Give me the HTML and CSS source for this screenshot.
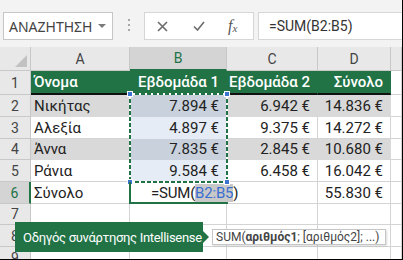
FILE: index.html
```html
<!DOCTYPE html>
<html>
  <head>
    <title>SUM</title>
    <link rel="stylesheet" href="styles.css">
  </head>
  <body>
    <div class="window">

      <div class="formula-bar">
        <div class="name-box"><span>ΑΝΑΖΗΤΗΣΗ</span><i class="caret"></i></div>
        <div class="grip"><i></i><i></i><i></i></div>
        <div class="fx-box">
          <svg class="ico cancel" width="11" height="11" viewBox="0 0 11 11"><path d="M1 1L10 10M10 1L1 10"/></svg>
          <svg class="ico enter" width="12" height="10" viewBox="0 0 12 10"><path d="M1 5.5L4.5 9L11 1"/></svg>
          <span class="fx">f<sub>x</sub></span>
        </div>
        <div class="formula">=SUM(B2:B5)</div>
      </div>

      <div class="sheet">
        <div class="c hd corner"><i class="tri"></i></div>
        <div class="c hd">A</div>
        <div class="c hd sel">B</div>
        <div class="c hd">C</div>
        <div class="c hd">D</div>
        <div class="c hd"></div>

        <div class="c rh">1</div>
        <div class="c th">Όνομα</div>
        <div class="c th num">Εβδομάδα 1</div>
        <div class="c th num">Εβδομάδα 2</div>
        <div class="c th num">Σύνολο</div>
        <div class="c"></div>

        <div class="c rh">2</div>
        <div class="c band">Νικήτας</div>
        <div class="c num band pick">7.894 €</div>
        <div class="c num band">6.942 €</div>
        <div class="c num band">14.836 €</div>
        <div class="c"></div>

        <div class="c rh">3</div>
        <div class="c">Αλεξία</div>
        <div class="c num pick">4.897 €</div>
        <div class="c num">9.375 €</div>
        <div class="c num">14.272 €</div>
        <div class="c"></div>

        <div class="c rh">4</div>
        <div class="c band">Άννα</div>
        <div class="c num band pick">7.835 €</div>
        <div class="c num band">2.845 €</div>
        <div class="c num band">10.680 €</div>
        <div class="c"></div>

        <div class="c rh">5</div>
        <div class="c">Ράνια</div>
        <div class="c num pick">9.584 €</div>
        <div class="c num">6.458 €</div>
        <div class="c num">16.042 €</div>
        <div class="c"></div>

        <div class="c rh sel-row">6</div>
        <div class="c">Σύνολο</div>
        <div class="c edit">=SUM(<span class="ref">B2:B5</span><i class="cursor"></i>)</div>
        <div class="c"></div>
        <div class="c num">55.830 €</div>
        <div class="c"></div>

        <div class="c rh">7</div>
        <div class="c"></div><div class="c"></div><div class="c"></div><div class="c"></div><div class="c"></div>

        <div class="c rh">8</div>
        <div class="c"></div><div class="c"></div><div class="c"></div><div class="c"></div><div class="c"></div>

        <div class="c rh">9</div>
        <div class="c"></div><div class="c"></div><div class="c"></div><div class="c"></div><div class="c"></div>

        <!-- range finder B2:B5 and active cell B6 -->
        <div class="range">
          <i class="h tl"></i><i class="h tr"></i><i class="h bl"></i><i class="h br"></i>
        </div>
        <div class="active"></div>
      </div>

      <div class="tip">Οδηγός συνάρτησης Intellisense</div>
      <div class="sig">SUM(<b>αριθμός1</b>; [αριθμός2]; ...)</div>
    </div>
  </body>
</html>
```

FILE: styles.css
```css
* {
  box-sizing: border-box;
}

body {
  margin: 0;
  background: #fff;
  font-family: Roboto, "Noto Sans", sans-serif;
  color: #222;
}

.window {
  position: relative;
  width: 403px;
  height: 260px;
  border-right: 1px solid #000;
  border-bottom: 1px solid #000;
  overflow: hidden;
}

/* formula bar */
.formula-bar {
  height: 47px;
  background: #f3f3f3;
  display: flex;
  align-items: flex-start;
  padding: 12px 0 0 3px;
}

.name-box {
  width: 110px;
  height: 28px;
  background: #fff;
  border: 1px solid #c6c6c6;
  display: flex;
  align-items: center;
  padding-left: 5px;
  font: 14px "Noto Sans", sans-serif;
  color: #444;
}

.caret {
  margin-left: auto;
  margin-right: 6px;
  border-left: 4px solid transparent;
  border-right: 4px solid transparent;
  border-top: 4px solid #7a7a7a;
}

.grip {
  width: 31px;
  display: flex;
  flex-direction: column;
  align-items: center;
  gap: 3px;
  padding-top: 7px;
}

.grip i {
  width: 2px;
  height: 2px;
  background: #a8a8a8;
}

.fx-box {
  width: 110px;
  height: 28px;
  background: #fff;
  border: 1px solid #d6d6d6;
  display: flex;
  align-items: center;
  padding-left: 12px;
}

.ico {
  fill: none;
  stroke: #6b6b6b;
  stroke-width: 1.6;
}

.enter {
  margin-left: 25px;
}

.fx {
  margin-left: 23px;
  font: italic 16px "Liberation Serif", serif;
  color: #555;
}

.fx sub {
  font-size: 11px;
  vertical-align: -1px;
}

.formula {
  flex: 1;
  height: 28px;
  margin-left: 4px;
  background: #fff;
  border: 1px solid #d6d6d6;
  border-right: 0;
  padding-left: 10px;
  font: 14px Roboto, sans-serif;
  line-height: 26px;
  color: #333;
}

/* sheet */
.sheet {
  position: relative;
  display: grid;
  grid-template-columns: 31px 99px 97px 91px 73px 1fr;
  grid-template-rows: 24px 24px 22px 22px 21px 22px 22px 21px 22px 22px;
  font-size: 15px;
}

.c {
  border-right: 1px solid #d4d4d4;
  border-bottom: 1px solid #d4d4d4;
  display: flex;
  align-items: center;
  padding: 0 7px 0 3px;
  white-space: nowrap;
  overflow: hidden;
}

.num {
  justify-content: flex-end;
}

.hd,
.rh {
  background: #e8e8e8;
  border-color: #c8c8c8;
  justify-content: center;
  padding: 0;
  color: #444;
  font-size: 14px;
}

.hd.sel {
  background: #d4d4d4;
  color: #217346;
  border-bottom: 2px solid #217346;
}

.rh.sel-row {
  background: #d4d4d4;
  color: #217346;
  border-right: 2px solid #217346;
}

.corner {
  position: relative;
}

.tri {
  position: absolute;
  right: 3px;
  bottom: 3px;
  border-left: 12px solid transparent;
  border-bottom: 12px solid #c2c2c2;
}

.th {
  background: #217346;
  color: #fff;
  font-weight: 500;
  border-right-color: #217346;
  border-bottom: 2px solid #111;
}

.band {
  background: #d9d9d9;
  border-color: #d9d9d9;
}

.pick {
  background: #e6ecf6;
  border-color: #e6ecf6;
}

.band.pick {
  background: #c9d1dd;
  border-color: #c9d1dd;
}

.edit {
  overflow: visible;
  border-right-color: transparent;
  padding-left: 21px;
  letter-spacing: -0.2px;
}

.ref {
  background: #c8c8c8;
  color: #3a6fd1;
}

.cursor {
  display: inline-block;
  width: 1px;
  height: 15px;
  background: #000;
  vertical-align: middle;
}

.range {
  position: absolute;
  grid-column: 3 / 4;
  grid-row: 3 / 7;
  top: -2px;
  left: -1px;
  right: -1px;
  bottom: -1px;
  background:
    repeating-linear-gradient(90deg, #217346 0 4px, #fff 4px 6px) left top / 100% 2px no-repeat,
    repeating-linear-gradient(90deg, #217346 0 4px, #fff 4px 6px) left bottom / 100% 2px no-repeat,
    repeating-linear-gradient(180deg, #217346 0 4px, #fff 4px 6px) left top / 2px 100% no-repeat,
    repeating-linear-gradient(180deg, #217346 0 4px, #fff 4px 6px) right top / 2px 100% no-repeat;
}

.h {
  position: absolute;
  width: 6px;
  height: 6px;
  background: #3b73cf;
  border: 1px solid #fff;
}

.h.tl { left: -2px; top: -2px; }
.h.tr { right: -2px; top: -2px; }
.h.bl { left: -2px; bottom: -2px; }
.h.br { right: -2px; bottom: -2px; }

.active {
  position: absolute;
  grid-column: 3 / 4;
  grid-row: 7 / 8;
  top: 0;
  left: -1px;
  right: -1px;
  bottom: 0;
  border-left: 2px solid #217346;
  border-bottom: 2px solid #217346;
}

/* tooltips */
.tip {
  position: absolute;
  left: 15px;
  top: 222px;
  width: 188px;
  height: 30px;
  background: #217346;
  color: #fff;
  font: 13px Roboto, sans-serif;
  letter-spacing: -0.3px;
  white-space: nowrap;
  padding-left: 8px;
  display: flex;
  align-items: center;
}

.tip::after {
  content: "";
  position: absolute;
  right: -6px;
  top: 9px;
  border-left: 6px solid #217346;
  border-top: 6px solid transparent;
  border-bottom: 6px solid transparent;
}

.sig {
  position: absolute;
  left: 212px;
  top: 229px;
  width: 174px;
  height: 16px;
  background: #fff;
  border: 1px solid #c6c6c6;
  box-shadow: 1px 1px 2px rgba(0, 0, 0, 0.15);
  font: 12px Roboto, sans-serif;
  line-height: 14px;
  padding-left: 3px;
  color: #444;
  white-space: nowrap;
}
```
